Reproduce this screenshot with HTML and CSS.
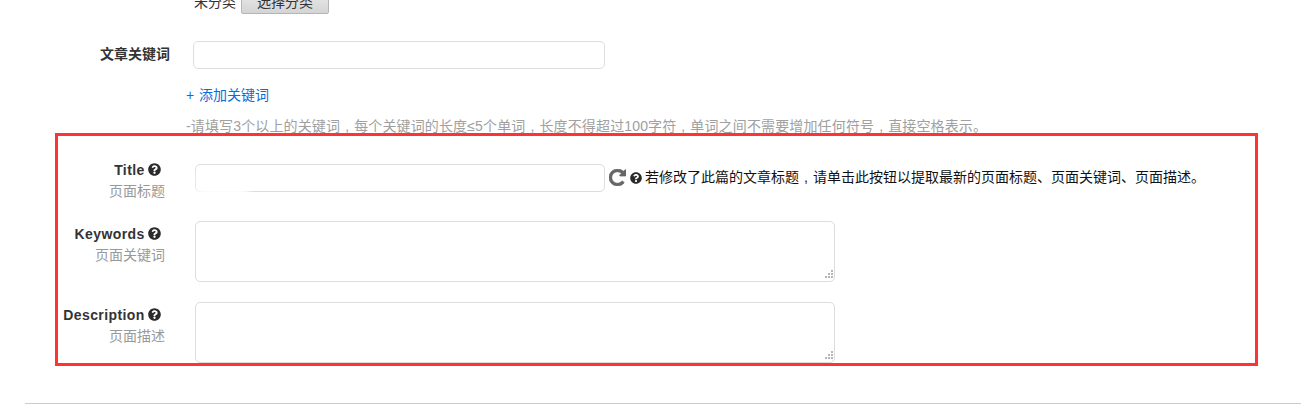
FILE: index.html
```html
<!DOCTYPE html>
<html lang="zh-CN">
<head>
    <meta charset="UTF-8">
    <title>SEO Settings</title>
    <link rel="stylesheet" href="styles.css">
</head>
<body>
    <svg class="icon-sprite" aria-hidden="true">
        <symbol id="icon-help" viewBox="0 0 512 512">
            <path d="M504 256c0 136.997-111.043 248-248 248S8 392.997 8 256C8 119.083 119.043 8 256 8s248 111.083 248 248zM262.655 90c-54.497 0-89.255 22.957-116.549 63.758-3.536 5.286-2.353 12.415 2.715 16.258l34.699 26.31c5.205 3.947 12.621 3.008 16.665-2.122 17.864-22.658 30.113-35.797 57.303-35.797 20.429 0 45.698 13.148 45.698 32.958 0 14.976-12.363 22.667-32.534 33.976C247.128 238.528 216 254.941 216 296v4c0 6.627 5.373 12 12 12h56c6.627 0 12-5.373 12-12v-1.333c0-28.462 83.186-29.647 83.186-106.667 0-58.002-60.165-102-116.531-102zM256 338c-25.365 0-46 20.635-46 46 0 25.364 20.635 46 46 46s46-20.636 46-46c0-25.365-20.635-46-46-46z"/>
        </symbol>
        <symbol id="icon-grip" viewBox="0 0 9 9">
            <path d="M7 0h2v2H7zM4 3h2v2H4zM7 3h2v2H7zM1 6h2v2H1zM4 6h2v2H4zM7 6h2v2H7z"/>
        </symbol>
    </svg>

    <div class="page">
        <div class="category-row">
            <span class="category-value">未分类</span>
            <button type="button" class="btn-category">选择分类</button>
        </div>

        <div class="keyword-row">
            <label class="keyword-label" for="keywords">文章关键词</label>
            <input type="text" id="keywords" class="field field-keyword">
        </div>
        <a href="#" class="add-keyword">+ 添加关键词</a>
        <p class="hint">-请填写3个以上的关键词<span class="comma">,</span>每个关键词的长度≤5个单词<span class="comma">,</span>长度不得超过100字符<span class="comma">,</span>单词之间不需要增加任何符号<span class="comma">,</span>直接空格表示。</p>

        <div class="seo-section">
            <div class="seo-row seo-row-title">
                <div class="seo-label">
                    <div class="seo-name">Title <svg class="icon-help"><use href="#icon-help"/></svg></div>
                    <div class="seo-sub">页面标题</div>
                </div>
                <div class="title-field">
                    <input type="text" class="field field-title">
                    <span class="smudge"></span>
                </div>
                <svg class="icon-refresh" viewBox="128 128 1536 1536">
                    <path d="M1664 256v448q0 26-19 45t-45 19h-448q-42 0-59-40-17-39 14-69l138-138q-148-137-349-137-104 0-198.5 40.5t-163.5 109.5-109.5 163.5-40.5 198.5 40.5 198.5 109.5 163.5 163.5 109.5 198.5 40.5q119 0 225-52t179-147q7-10 23-12 15 0 25 9l137 138q9 8 9.5 20.5t-7.5 22.5q-109 132-264 204.5t-327 72.5q-156 0-298-61t-245-164-164-245-61-298 61-298 164-245 245-164 298-61q147 0 284.5 55.5t244.5 156.5l130-129q29-31 70-14 39 17 39 59z"/>
                </svg>
                <svg class="icon-help icon-help-note"><use href="#icon-help"/></svg>
                <span class="title-note">若修改了此篇的文章标题<span class="comma">,</span>请单击此按钮以提取最新的页面标题、页面关键词、页面描述。</span>
            </div>

            <div class="seo-row">
                <div class="seo-label">
                    <div class="seo-name">Keywords <svg class="icon-help"><use href="#icon-help"/></svg></div>
                    <div class="seo-sub">页面关键词</div>
                </div>
                <div class="area-wrap">
                    <textarea class="field field-area"></textarea>
                    <svg class="grip"><use href="#icon-grip"/></svg>
                </div>
            </div>

            <div class="seo-row">
                <div class="seo-label">
                    <div class="seo-name">Description <svg class="icon-help"><use href="#icon-help"/></svg></div>
                    <div class="seo-sub">页面描述</div>
                </div>
                <div class="area-wrap">
                    <textarea class="field field-area"></textarea>
                    <svg class="grip"><use href="#icon-grip"/></svg>
                </div>
            </div>
        </div>

        <hr class="divider">
    </div>

    <div class="highlight-box"></div>
</body>
</html>
```

FILE: styles.css
```css
:root {
    --text: #333;
    --muted: #999;
    --border: #ddd;
    --link: #0a6ed6;
    --red: #ff3333;
}

* {
    margin: 0;
    padding: 0;
    box-sizing: border-box;
}

html, body {
    height: 408px;
    overflow: hidden;
}

body {
    position: relative;
    background: #fff;
    color: var(--text);
    font-family: "Liberation Sans", "Noto Sans CJK SC", sans-serif;
    font-size: 14px;
}

.icon-sprite {
    display: none;
}

.page {
    margin-top: -13px;
    padding-left: 25px;
}

/* clipped category row */
.category-row {
    display: flex;
    align-items: center;
    gap: 5px;
    height: 27px;
    margin-left: 169px;
}

.btn-category {
    width: 88px;
    height: 27px;
    border: 1px solid #b5b5b5;
    border-radius: 2px;
    background: linear-gradient(#eee, #d4d4d4);
    color: var(--text);
    font: inherit;
}

.keyword-row {
    display: flex;
    align-items: center;
    margin-top: 27px;
}

.keyword-label {
    width: 145px;
    margin: 0 23px 4px 0;
    text-align: right;
    font-weight: 700;
}

.field {
    display: block;
    border: 1px solid var(--border);
    border-radius: 5px;
    background: #fff;
    outline: none;
}

.field-keyword {
    width: 412px;
    height: 28px;
}

.add-keyword {
    display: block;
    margin: 16px 0 0 161px;
    line-height: 20px;
    word-spacing: 1px;
    color: var(--link);
    text-decoration: none;
}

.hint {
    margin: 11px 0 0 161px;
    line-height: 20px;
    letter-spacing: 0.14px;
    color: #a0a0a0;
}

/* comma sits in the middle of a full-width cell */
.comma {
    display: inline-block;
    width: 14px;
    text-align: center;
}

.seo-section {
    display: flex;
    flex-direction: column;
    gap: 20px;
    margin-top: 21px;
}

.seo-row {
    display: flex;
    align-items: flex-start;
}

.seo-row-title {
    height: 44px;
}

.seo-row-title .seo-label {
    padding-top: 3px;
}

.seo-row-title .title-field {
    margin-top: 7px;
}

.seo-row-title .title-note {
    margin-top: 6px;
}

.seo-label {
    flex: none;
    width: 141px;
    margin-right: 29px;
    padding-top: 3px;
    text-align: right;
}

.seo-name {
    padding-right: 5px;
    line-height: 20px;
    font-weight: 700;
    letter-spacing: 0.4px;
}

.seo-sub {
    padding-right: 1px;
    line-height: 22px;
    color: var(--muted);
}

.icon-help {
    display: inline-block;
    width: 13px;
    height: 13px;
    margin-left: -1px;
    vertical-align: -1px;
    fill: #2b2b2b;
}

.title-field {
    position: relative;
}

.field-title {
    width: 410px;
    height: 28px;
}

/* blurred-out value in the title input */
.smudge {
    position: absolute;
    left: 2px;
    bottom: -3px;
    width: 52px;
    height: 26px;
    background: #fff;
    filter: blur(3px);
}

.icon-refresh {
    flex: none;
    width: 17px;
    height: 17px;
    margin: 12px 0 0 4px;
    fill: #666;
    stroke: #666;
    stroke-width: 60;
}

.icon-help-note {
    flex: none;
    width: 12px;
    height: 12px;
    margin: 15px 0 0 4px;
}

.title-note {
    margin-left: 3px;
    line-height: 28px;
    color: #111;
}

.area-wrap {
    position: relative;
}

.field-area {
    width: 640px;
    height: 61px;
    resize: none;
}

.grip {
    position: absolute;
    right: 2px;
    bottom: 3px;
    width: 9px;
    height: 9px;
    fill: #b5b5b5;
}

.divider {
    height: 1px;
    margin-top: 40px;
    border: 0;
    background: #ccc;
}

.highlight-box {
    position: absolute;
    left: 55px;
    top: 133px;
    width: 1203px;
    height: 233px;
    border: 3px solid var(--red);
    pointer-events: none;
}
```
